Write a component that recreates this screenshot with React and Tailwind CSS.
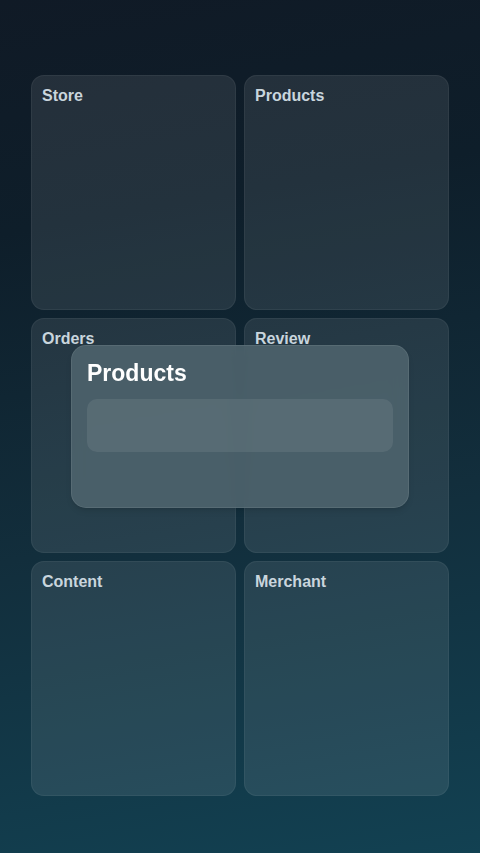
import React from "react";

const sections = ["Store", "Products", "Orders", "Review", "Content", "Merchant"];

const Card = ({ title }) => (
  <div className="h-[235px] rounded-[13px] bg-white/[0.09] border border-white/[0.05] px-[10px] pt-[10px]">
    <div className="text-[16px] leading-[20px] font-bold text-[#c9d5dd]">{title}</div>
  </div>
);

const App = () => {
  return (
    <div
      className="relative w-full min-h-[853px] overflow-hidden bg-[linear-gradient(170deg,#101a26_0%,#0e1e2a_25%,#122e3c_60%,#124152_100%)]"
      style={{ fontFamily: '"Liberation Sans", Arial, sans-serif' }}
    >
      <div className="px-[31px] pt-[75px] grid grid-cols-2 gap-x-[8px] gap-y-[8px]">
        {sections.map((s) => (
          <Card key={s} title={s} />
        ))}
      </div>

      {/* floating panel */}
      <div className="absolute left-[71px] top-[345px] w-[338px] h-[163px] rounded-[15px] bg-[#50656f]/[0.85] backdrop-blur-sm border border-white/[0.08] shadow-md px-[15px] pt-[13px]">
        <div className="text-[23px] leading-[28px] font-bold text-white">Products</div>
        <div className="mt-[12px] h-[53px] rounded-[10px] bg-white/[0.08]"></div>
      </div>
    </div>
  );
};

export default App;
